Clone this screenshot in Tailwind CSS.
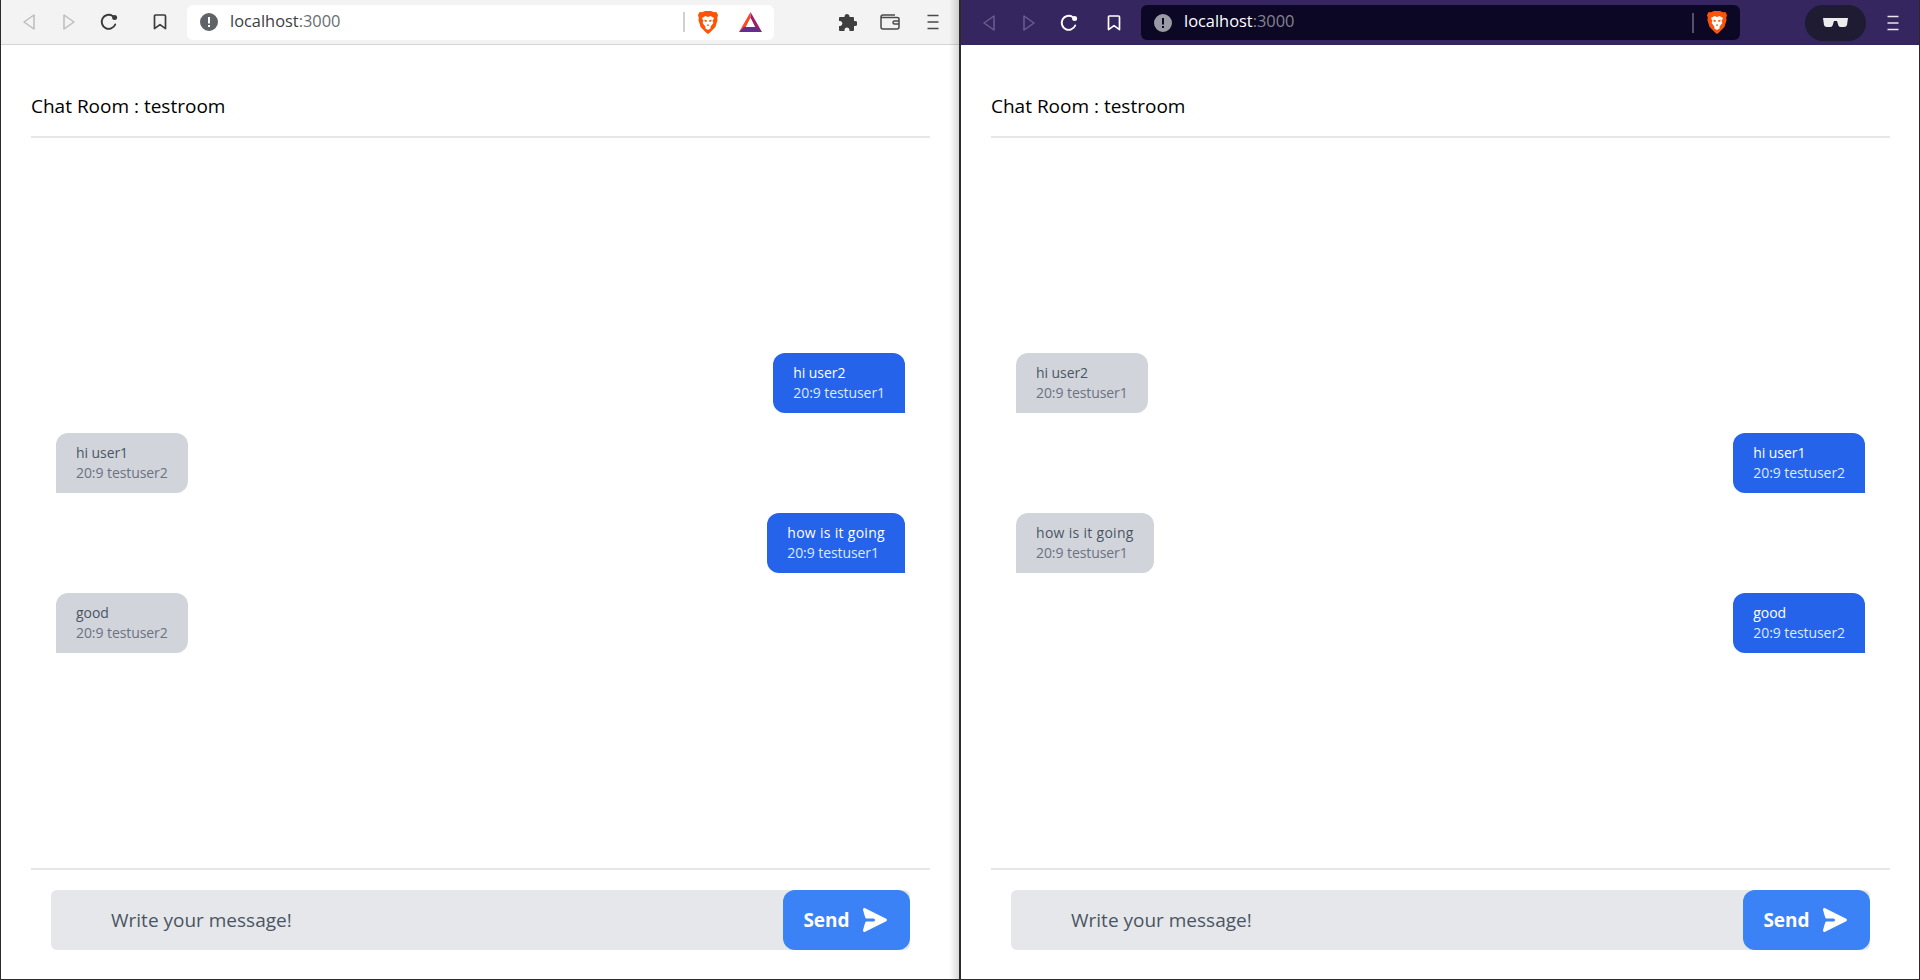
<!DOCTYPE html>
<html lang="en">
<head>
    <meta charset="UTF-8">
    <title>Chat Room</title>
    <script src="https://cdn.jsdelivr.net/npm/@tailwindcss/browser@4"></script>
</head>
<body class="font-['Open_Sans','Noto_Sans',sans-serif]">
    <!-- shared toolbar icons -->
    <svg class="hidden">
        <symbol id="back" viewBox="0 0 12 16"><path d="M11 1 L1 8 L11 15 Z" fill="none" stroke="currentColor" stroke-width="1.5" stroke-linejoin="round"/></symbol>
        <symbol id="forward" viewBox="0 0 12 16"><path d="M1 1 L11 8 L1 15 Z" fill="none" stroke="currentColor" stroke-width="1.5" stroke-linejoin="round"/></symbol>
        <symbol id="reload" viewBox="0 0 18 18"><path d="M15.2 11.5 A7 7 0 1 1 12.6 3" fill="none" stroke="currentColor" stroke-width="1.9" stroke-linecap="round"/><circle cx="14.6" cy="4.4" r="2.5" fill="currentColor"/></symbol>
        <symbol id="bookmark" viewBox="0 0 14 16"><path d="M1.5 2 Q1.5 1 2.5 1 H11.5 Q12.5 1 12.5 2 V14.6 L7 10.6 L1.5 14.6 Z" fill="none" stroke="currentColor" stroke-width="1.7" stroke-linejoin="round"/></symbol>
        <symbol id="brave" viewBox="0 0 20 23">
            <path d="M4 1.2 L7 0 H13 L16 1.2 L18.4 1 L20 4 L19.2 7 L19.6 9 L17.4 16 L12 21.6 L10 23 L8 21.6 L2.6 16 L0.4 9 L0.8 7 L0 4 L1.6 1 Z" fill="#fb5407"/>
            <path d="M4 7 L7.5 5 L10 6 L12.5 5 L16 7 L14.6 10 L15.4 12 L12.6 15.4 L12.6 17.4 L10 19 L7.4 17.4 L7.4 15.4 L4.6 12 L5.4 10 Z" fill="#fff"/>
            <path d="M6.4 8.6 L9 9.4 L8.4 11 L6.8 10.6 Z M13.6 8.6 L11 9.4 L11.6 11 L13.2 10.6 Z M9 13.4 H11 L10.6 15 H9.4 Z" fill="#fb5407"/>
        </symbol>
        <symbol id="bat" viewBox="0 0 23 20">
            <path d="M11.5 0 L0 20 L7 15 L11.5 6 Z" fill="#ff4724"/>
            <path d="M11.5 0 L23 20 L16 15 L11.5 6 Z" fill="#9e1f63"/>
            <path d="M0 20 H23 L18 15 H5 Z" fill="#662d91"/>
            <path d="M11.5 6 L7 15 H16 Z" fill="#fff"/>
        </symbol>
        <symbol id="menu" viewBox="0 0 12 16"><path d="M0.5 1.5 H11.5 M0.5 8 H11.5 M0.5 14.5 H11.5" stroke="currentColor" stroke-width="1.6" fill="none"/></symbol>
        <symbol id="info" viewBox="0 0 18 18"><path fill-rule="evenodd" d="M9 0 A9 9 0 1 1 9 18 A9 9 0 1 1 9 0 Z M8 4 H10 V10.4 H8 Z M8 12 H10 V14 H8 Z" fill="currentColor"/></symbol>
        <symbol id="send" viewBox="0 0 20 20"><path d="M10.894 2.553a1 1 0 00-1.788 0l-7 14a1 1 0 001.169 1.409l5-1.429A1 1 0 009 15.571V11a1 1 0 112 0v4.571a1 1 0 00.725.962l5 1.428a1 1 0 001.17-1.408l-7-14z" fill="currentColor"/></symbol>
    </svg>

    <div class="flex w-[1920px] h-[980px] overflow-hidden bg-[#2b2b2b]">
        <!-- left window -->
        <div class="relative w-[958px] h-[979px] ml-px flex flex-col bg-white">
            <div class="h-[45px] shrink-0 flex items-center bg-[#f3f3f3] border-b border-[#d4d4d4]">
                <svg class="w-3 h-4 ml-[22px] text-[#bdbdbd]"><use href="#back"/></svg>
                <svg class="w-3 h-4 ml-[28px] text-[#bdbdbd]"><use href="#forward"/></svg>
                <svg class="w-[18px] h-[18px] ml-[25px] text-[#3b3b3b]"><use href="#reload"/></svg>
                <svg class="w-[14px] h-4 ml-[35px] text-[#3b3b3b]"><use href="#bookmark"/></svg>
                <div class="w-[587px] h-[35px] ml-[20px] flex items-center bg-white rounded-md">
                    <svg class="w-[18px] h-[18px] ml-[13px] text-[#5f6368]"><use href="#info"/></svg>
                    <span class="ml-[12px] mb-[2px] text-[16.4px] text-[#3c4043]">localhost<span class="text-[#6a6d72]">:3000</span></span>
                    <div class="w-[2px] h-[20px] ml-auto bg-[#d0d0d0]"></div>
                    <svg class="w-5 h-[23px] ml-[13px]"><use href="#brave"/></svg>
                    <svg class="w-[23px] h-5 ml-[21px] mr-[12px]"><use href="#bat"/></svg>
                </div>
                <svg class="w-[19px] h-[19px] ml-[64px] text-[#3f3f3f]" viewBox="0 0 19 19"><path d="M6.5 3 A2.6 2.6 0 0 1 11.5 3 V4 H15 Q16 4 16 5 V8 H17 A2.5 2.5 0 0 1 17 13 H16 V17 Q16 18 15 18 H11.5 V17 A2.5 2.5 0 0 0 6.5 17 V18 H2 Q1 18 1 17 V13 H2.5 A2.6 2.6 0 0 0 2.5 8 H1 V5 Q1 4 2 4 H6.5 Z" fill="currentColor"/></svg>
                <svg class="w-[20px] h-4 ml-[23px] text-[#4a4a4a]" viewBox="0 0 20 16"><path d="M3 1 H15 M3 1 Q1 1 1 3 V13 Q1 15 3 15 H17 Q19 15 19 13 V5 Q19 3.5 17 3.5 H1.5 M19 7 H14.5 Q13 7 13 8.5 Q13 10 14.5 10 H19" fill="none" stroke="currentColor" stroke-width="1.5"/></svg>
                <svg class="w-3 h-4 ml-[27px] text-[#4a4a4a]"><use href="#menu"/></svg>
            </div>
            <div class="flex-1 min-h-0 flex flex-col pl-[30px] pr-[29px]">
                <div class="pt-[47px] pb-[16px] border-b-2 border-[#e5e7eb] text-[19px] leading-[28px] text-black">Chat Room : testroom</div>
                <div class="flex-1 flex flex-col justify-center gap-5 px-[25px] text-[14px] leading-5 tracking-[-0.07px]">
                    <div class="self-end py-2.5 px-5 rounded-xl rounded-br-none bg-[#2563eb] text-white">
                        <div>hi user2</div><div class="text-[#dbeafe]">20:9 testuser1</div>
                    </div>
                    <div class="self-start py-2.5 px-5 rounded-xl rounded-bl-none bg-[#d1d5db] text-[#4b5563]">
                        <div>hi user1</div><div class="text-[#6b7280]">20:9 testuser2</div>
                    </div>
                    <div class="self-end py-2.5 px-5 rounded-xl rounded-br-none bg-[#2563eb] text-white">
                        <div class="tracking-[0.3px]">how is it going</div><div class="text-[#dbeafe]">20:9 testuser1</div>
                    </div>
                    <div class="self-start py-2.5 px-5 rounded-xl rounded-bl-none bg-[#d1d5db] text-[#4b5563]">
                        <div>good</div><div class="text-[#6b7280]">20:9 testuser2</div>
                    </div>
                </div>
                <div class="border-t-2 border-[#e5e7eb] pt-5 pb-[29px] px-5">
                    <div class="flex h-[60px] bg-[#e5e7eb] rounded-md">
                        <div class="flex-1 pl-[60px] flex items-center text-[19px] text-[#4b5563]">Write your message!</div>
                        <button class="flex items-center justify-center w-[127px] bg-[#3b82f6] rounded-xl text-white font-bold text-[19px]">
                            Send
                            <svg class="w-[30px] h-[30px] ml-[10px] rotate-90"><use href="#send"/></svg>
                        </button>
                    </div>
                </div>
            </div>
            <div class="absolute top-0 right-0 bottom-0 w-[10px] bg-linear-to-r from-black/0 to-black/15"></div>
        </div>

        <!-- right window -->
        <div class="w-[958px] h-[979px] ml-[2px] flex flex-col bg-white">
            <div class="h-[45px] shrink-0 flex items-center bg-[#352660]">
                <svg class="w-3 h-4 ml-[22px] text-[#6a5d8f]"><use href="#back"/></svg>
                <svg class="w-3 h-4 ml-[28px] text-[#6a5d8f]"><use href="#forward"/></svg>
                <svg class="w-[18px] h-[18px] ml-[25px] text-white"><use href="#reload"/></svg>
                <svg class="w-[14px] h-4 ml-[29px] text-white"><use href="#bookmark"/></svg>
                <div class="w-[599px] h-[35px] ml-[20px] flex items-center bg-[#0b0725] rounded-md">
                    <svg class="w-[18px] h-[18px] ml-[13px] text-[#9a9aa5]"><use href="#info"/></svg>
                    <span class="ml-[12px] mb-[2px] text-[16.4px] text-white">localhost<span class="text-[#85838f]">:3000</span></span>
                    <div class="w-[2px] h-[20px] ml-auto bg-[#55536a]"></div>
                    <svg class="w-5 h-[23px] ml-[13px] mr-[13px]"><use href="#brave"/></svg>
                </div>
                <div class="w-[61px] h-[36px] ml-[65px] flex items-center justify-center rounded-full bg-[#1e1b33]">
                    <svg class="w-[25px] h-[9px] text-[#ececec]" viewBox="0 0 25 9"><path d="M0 0 H25 L24 7 Q23.6 9 21 9 H18 Q16 9 15.4 7.4 L14 3 H11 L9.6 7.4 Q9 9 7 9 H4 Q1.4 9 1 7 Z" fill="currentColor"/></svg>
                </div>
                <svg class="w-3 h-4 ml-[21px] text-[#e8e8ee]"><use href="#menu"/></svg>
            </div>
            <div class="flex-1 min-h-0 flex flex-col pl-[30px] pr-[29px]">
                <div class="pt-[47px] pb-[16px] border-b-2 border-[#e5e7eb] text-[19px] leading-[28px] text-black">Chat Room : testroom</div>
                <div class="flex-1 flex flex-col justify-center gap-5 px-[25px] text-[14px] leading-5 tracking-[-0.07px]">
                    <div class="self-start py-2.5 px-5 rounded-xl rounded-bl-none bg-[#d1d5db] text-[#4b5563]">
                        <div>hi user2</div><div class="text-[#6b7280]">20:9 testuser1</div>
                    </div>
                    <div class="self-end py-2.5 px-5 rounded-xl rounded-br-none bg-[#2563eb] text-white">
                        <div>hi user1</div><div class="text-[#dbeafe]">20:9 testuser2</div>
                    </div>
                    <div class="self-start py-2.5 px-5 rounded-xl rounded-bl-none bg-[#d1d5db] text-[#4b5563]">
                        <div class="tracking-[0.3px]">how is it going</div><div class="text-[#6b7280]">20:9 testuser1</div>
                    </div>
                    <div class="self-end py-2.5 px-5 rounded-xl rounded-br-none bg-[#2563eb] text-white">
                        <div>good</div><div class="text-[#dbeafe]">20:9 testuser2</div>
                    </div>
                </div>
                <div class="border-t-2 border-[#e5e7eb] pt-5 pb-[29px] px-5">
                    <div class="flex h-[60px] bg-[#e5e7eb] rounded-md">
                        <div class="flex-1 pl-[60px] flex items-center text-[19px] text-[#4b5563]">Write your message!</div>
                        <button class="flex items-center justify-center w-[127px] bg-[#3b82f6] rounded-xl text-white font-bold text-[19px]">
                            Send
                            <svg class="w-[30px] h-[30px] ml-[10px] rotate-90"><use href="#send"/></svg>
                        </button>
                    </div>
                </div>
            </div>
        </div>
    </div>
</body>
</html>
